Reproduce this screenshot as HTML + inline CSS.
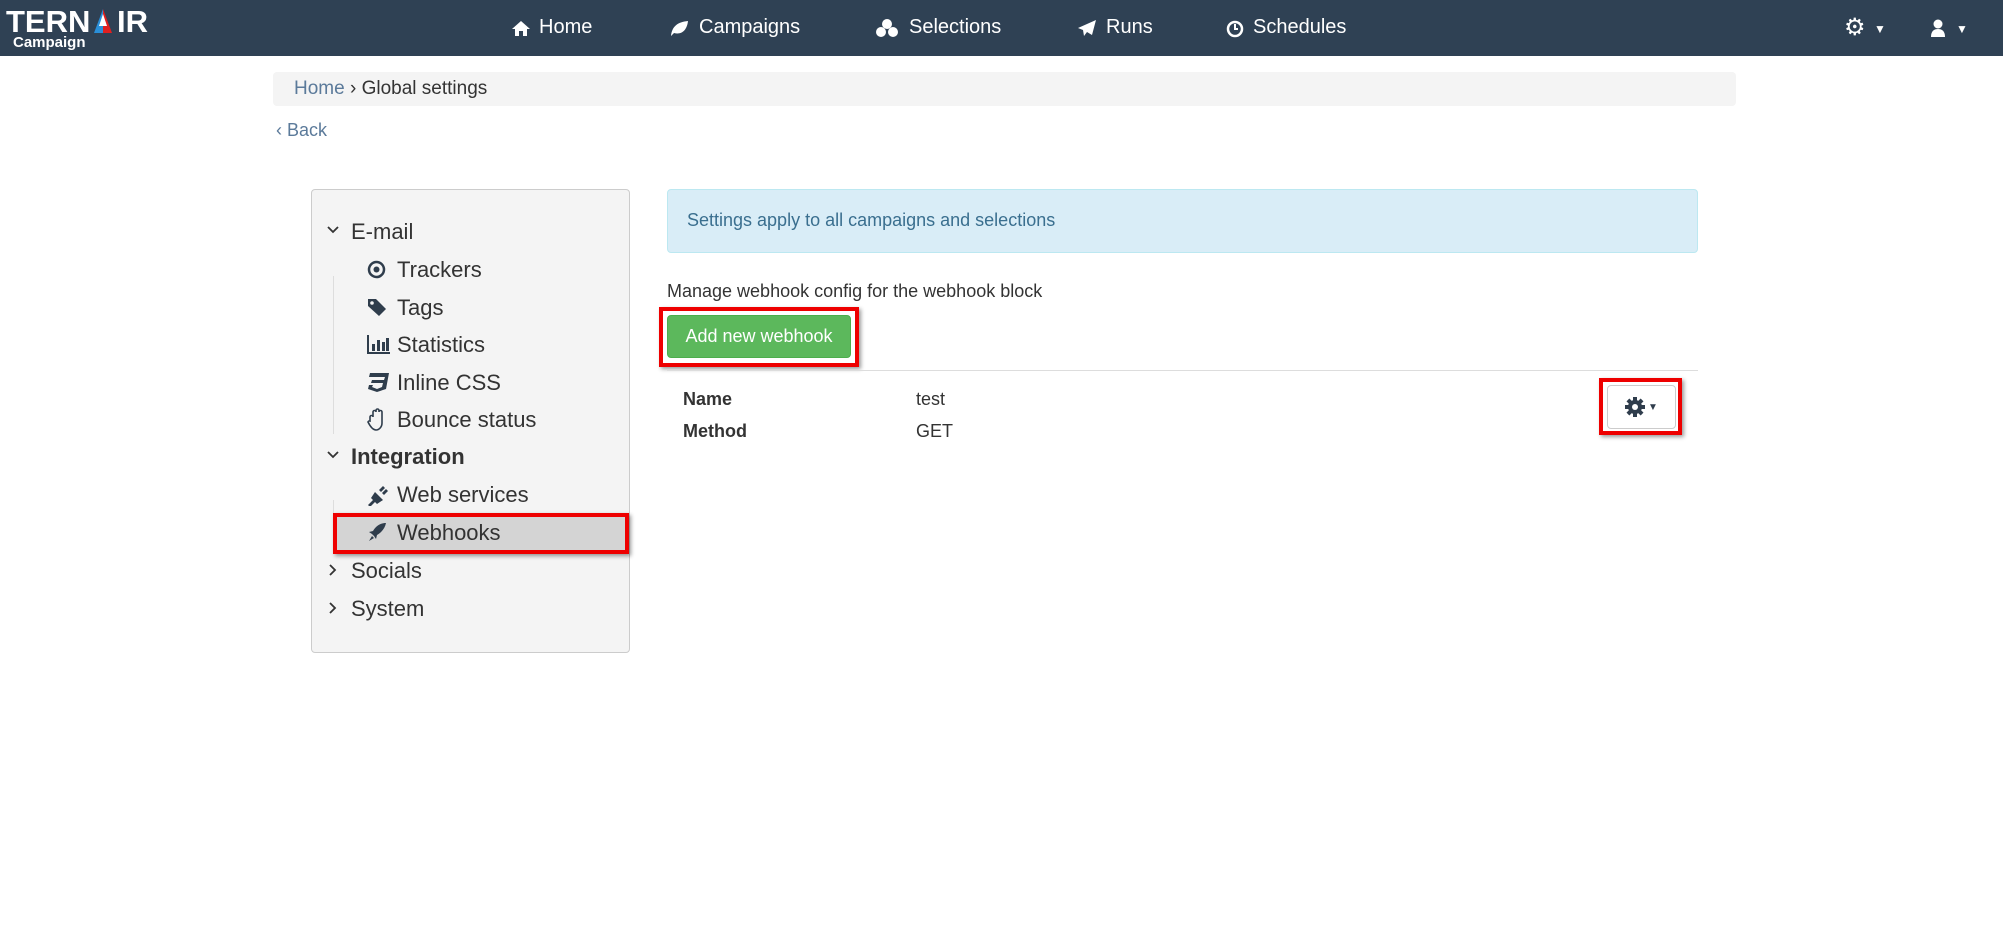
<!DOCTYPE html>
<html><head><meta charset="utf-8"><style>
*{box-sizing:border-box;margin:0;padding:0}
body{width:2003px;height:929px;background:#fff;font-family:"Liberation Sans",sans-serif;position:relative;overflow:hidden;color:#333}
.a{position:absolute;white-space:nowrap}
.nav{position:absolute;left:0;top:0;width:2003px;height:56px;background:#2f4154}
.nav .a{color:#fff;font-size:20px;top:16px}
.side{font-size:22px;color:#333}
.red{position:absolute;border:4px solid #e00;box-shadow:2px 2px 4px rgba(0,0,0,.4)}
</style></head><body>
<div class="nav">
  <div class="a" style="left:6px;top:4px;font-size:31px;font-weight:bold;color:#fff">TERN</div>
  <svg class="a" style="left:90px;top:9px" width="26" height="24" viewBox="0 0 26 24"><path d="M13 0L4 24h9z" fill="#2a8fd8"/><path d="M13 0l9 24h-9z" fill="#e02020"/><path d="M13 5l-4 12h8z" fill="#fff"/></svg>
  <div class="a" style="left:117px;top:4px;font-size:31px;font-weight:bold;color:#fff">IR</div>
  <div class="a" style="left:13px;top:34px;font-size:15px;font-weight:bold;color:#fff">Campaign</div>
  <svg class="a" style="left:511px;top:20px" width="20" height="17" viewBox="0 0 20 17"><path d="M10 1L1 9h3v7h4v-5h4v5h4V9h3z" fill="#fff"/></svg>
  <div class="a" style="left:539px">Home</div>
  <svg class="a" style="left:669px;top:20px" width="20" height="17" viewBox="0 0 20 17"><path d="M2 16C3 6 9 2 19 1 18 10 13 15 5 13L2 16z" fill="#fff"/></svg>
  <div class="a" style="left:699px">Campaigns</div>
  <svg class="a" style="left:875px;top:18px" width="24" height="20" viewBox="0 0 24 20"><circle cx="12" cy="6" r="5" fill="#fff"/><circle cx="6" cy="14" r="5" fill="#fff"/><circle cx="18" cy="14" r="5" fill="#fff"/></svg>
  <div class="a" style="left:909px">Selections</div>
  <svg class="a" style="left:1077px;top:19px" width="20" height="18" viewBox="0 0 20 18"><path d="M19 1L1 9l5 2 1 6 3-4 5 3z" fill="#fff"/></svg>
  <div class="a" style="left:1106px">Runs</div>
  <svg class="a" style="left:1226px;top:20px" width="18" height="18" viewBox="0 0 18 18"><circle cx="9" cy="9" r="7" fill="none" stroke="#fff" stroke-width="2.5"/><path d="M9 4v5h3" stroke="#fff" stroke-width="2" fill="none"/></svg>
  <div class="a" style="left:1253px">Schedules</div>
  <div class="a" style="left:1844px;top:13px;font-size:24px">⚙</div>
  <div class="a" style="left:1874px;top:22px;font-size:12px">▼</div>
  <svg class="a" style="left:1930px;top:19px" width="16" height="19" viewBox="0 0 16 19"><circle cx="8" cy="5" r="4.5" fill="#fff"/><path d="M1 18c0-6 3-8 7-8s7 2 7 8z" fill="#fff"/></svg>
  <div class="a" style="left:1956px;top:22px;font-size:12px">▼</div>
</div>
<div class="a" style="left:273px;top:72px;width:1463px;height:34px;background:#f4f4f4;border-radius:4px"></div>
<div class="a" style="left:294px;top:78px;font-size:19px;color:#5b7a9a">Home <span style="color:#333">›</span> <span style="color:#333">Global settings</span></div>
<div class="a" style="left:276px;top:120px;font-size:18px;color:#5b7a9a">‹ Back</div>

<div class="a" style="left:311px;top:189px;width:319px;height:464px;background:#f4f4f4;border:1px solid #ccc;border-radius:4px"></div>
<div class="a" style="left:333px;top:276px;width:1px;height:158px;background:#ddd"></div>
<div class="a" style="left:333px;top:500px;width:1px;height:20px;background:#ddd"></div>
<div class="a" style="left:336px;top:515px;width:290px;height:38px;background:#d4d4d4"></div>
<svg class="a" style="left:327px;top:226px" width="12" height="8"><path d="M1 1l5 5 5-5" stroke="#333" stroke-width="1.8" fill="none"/></svg>
<div class="a side" style="left:351px;top:219px">E-mail</div>
<svg class="a" style="left:367px;top:260px" width="19" height="19"><circle cx="9.5" cy="9.5" r="7.5" fill="none" stroke="#2f3d4c" stroke-width="2.5"/><circle cx="9.5" cy="9.5" r="3" fill="#2f3d4c"/></svg>
<div class="a side" style="left:397px;top:257px">Trackers</div>
<svg class="a" style="left:367px;top:298px" width="20" height="19"><path d="M1 1h8l10 10-7 7L1 8z" fill="#2f3d4c"/><circle cx="5" cy="5" r="1.8" fill="#f4f4f4"/></svg>
<div class="a side" style="left:397px;top:295px">Tags</div>
<svg class="a" style="left:367px;top:334px" width="24" height="20"><path d="M1 1v18h22" stroke="#2f3d4c" stroke-width="2" fill="none"/><rect x="5" y="10" width="3" height="7" fill="#2f3d4c"/><rect x="10" y="6" width="3" height="11" fill="#2f3d4c"/><rect x="15" y="8" width="3" height="9" fill="#2f3d4c"/><rect x="19" y="4" width="3" height="13" fill="#2f3d4c"/></svg>
<div class="a side" style="left:397px;top:332px">Statistics</div>
<svg class="a" style="left:367px;top:372px" width="22" height="21"><path d="M3 1h19l-3 16-9 3-9-3 1-4h4l-1 2 5 2 5-2 1-4H4l1-3h12l1-3H2z" fill="#2f3d4c"/></svg>
<div class="a side" style="left:397px;top:370px">Inline CSS</div>
<svg class="a" style="left:367px;top:408px" width="20" height="23"><path d="M3 13V9a1.5 1.5 0 013 0V4a1.5 1.5 0 013 0V2.5a1.5 1.5 0 013 0V4a1.5 1.5 0 013 0v11c0 4-3 7-6 7H9c-3 0-6-4-8-8a1.5 1.5 0 012-1z" fill="none" stroke="#2f3d4c" stroke-width="1.6"/></svg>
<div class="a side" style="left:397px;top:407px">Bounce status</div>
<svg class="a" style="left:327px;top:451px" width="12" height="8"><path d="M1 1l5 5 5-5" stroke="#333" stroke-width="1.8" fill="none"/></svg>
<div class="a side" style="left:351px;top:444px;font-weight:bold">Integration</div>
<svg class="a" style="left:367px;top:484px" width="22" height="22"><path d="M1 21l5-5-2-2 4-6 8 8-6 4-2-2-5 5zM12 6l4-4 2 2-4 4zm3 3l4-4 2 2-4 4z" fill="#2f3d4c"/></svg>
<div class="a side" style="left:397px;top:482px">Web services</div>
<svg class="a" style="left:367px;top:522px" width="20" height="20"><path d="M19 1c-6 0-10 3-13 8l-4 1 3 2 2 2 2 3 1-4c5-3 8-7 9-12zM5 14l-3 5 5-3z" fill="#2f3d4c"/></svg>
<div class="a side" style="left:397px;top:520px">Webhooks</div>
<div class="red" style="left:333px;top:513px;width:296px;height:41px"></div>
<svg class="a" style="left:329px;top:564px" width="8" height="12"><path d="M1 1l5 5-5 5" stroke="#333" stroke-width="1.8" fill="none"/></svg>
<div class="a side" style="left:351px;top:558px">Socials</div>
<svg class="a" style="left:329px;top:602px" width="8" height="12"><path d="M1 1l5 5-5 5" stroke="#333" stroke-width="1.8" fill="none"/></svg>
<div class="a side" style="left:351px;top:596px">System</div>

<div class="a" style="left:667px;top:189px;width:1031px;height:64px;background:#d9edf7;border:1px solid #bce8f1;border-radius:4px"></div>
<div class="a" style="left:687px;top:210px;font-size:18px;color:#3a6f8f">Settings apply to all campaigns and selections</div>
<div class="a" style="left:667px;top:281px;font-size:18px;color:#333">Manage webhook config for the webhook block</div>
<div class="a" style="left:667px;top:315px;width:184px;height:43px;background:#5cb85c;border:1px solid #4cae4c;border-radius:4px;color:#fff;font-size:18px;line-height:41px;text-align:center">Add new webhook</div>
<div class="red" style="left:659px;top:307px;width:200px;height:60px"></div>
<div class="a" style="left:667px;top:370px;width:1031px;height:1px;background:#ddd"></div>
<div class="a" style="left:683px;top:389px;font-size:18px;font-weight:bold">Name</div>
<div class="a" style="left:916px;top:389px;font-size:18px">test</div>
<div class="a" style="left:683px;top:421px;font-size:18px;font-weight:bold">Method</div>
<div class="a" style="left:916px;top:421px;font-size:18px">GET</div>
<div class="a" style="left:1607px;top:385px;width:69px;height:44px;border:1px solid #ccc;border-radius:4px;background:#fff"></div>
<svg class="a" style="left:1624px;top:396px" width="22" height="22" viewBox="0 0 22 22"><g fill="#2f3d4c"><circle cx="11" cy="11" r="7"/><rect x="9" y="1" width="4" height="20"/><rect x="1" y="9" width="20" height="4"/><rect x="9" y="1" width="4" height="20" transform="rotate(45 11 11)"/><rect x="9" y="1" width="4" height="20" transform="rotate(-45 11 11)"/></g><circle cx="11" cy="11" r="3" fill="#fff"/></svg>
<div class="a" style="left:1648px;top:402px;font-size:10px;color:#2f3d4c">▼</div>
<div class="red" style="left:1599px;top:378px;width:83px;height:57px"></div>
</body></html>
